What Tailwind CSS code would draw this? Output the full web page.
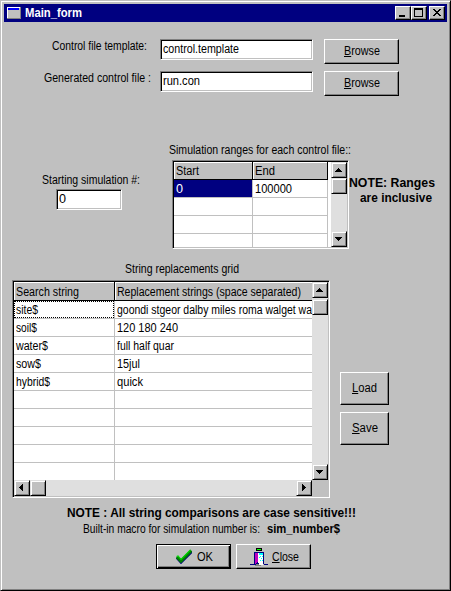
<!DOCTYPE html>
<html lang="en">
<head>
<meta charset="utf-8">
<title>Main_form</title>
<script src="https://cdn.jsdelivr.net/npm/@tailwindcss/browser@4"></script>
</head>
<body class="bg-[#c0c0c0] overflow-hidden">
<main class="w-[451px] h-[591px] flex flex-col bg-[#c0c0c0] text-black text-[12.5px] leading-4 font-['Liberation_Sans',Arial,sans-serif] border border-t-[#c0c0c0] border-l-[#c0c0c0] border-r-black border-b-black shadow-[inset_1px_1px_0_#fff,inset_-1px_-1px_0_#808080]">

  <header class="mx-[3px] mt-[3px] h-[18px] shrink-0 flex items-start bg-[#000080] text-white pl-[3px] pr-[2px]">
    <svg class="mt-[3px] w-[14px] h-[12px]" viewBox="0 0 14 12" shape-rendering="crispEdges"><path fill="#808080" d="M0 0h14v12H0z"/><path fill="#fff" d="M0 0h13v11H0z"/><path fill="#c0c0c0" d="M1 1h12v10H1z"/><path fill="#0000ff" d="M1 1h11v2H1z"/></svg>
    <h1 class="ml-1 mt-px font-bold text-[12.5px] leading-4"><span data-w="57">Main_form</span></h1>
    <div class="ml-auto mt-[2px] flex">
      <button class="w-4 h-[14px] bg-[#c0c0c0] border border-t-white border-l-white border-r-black border-b-black shadow-[inset_-1px_-1px_0_#808080]"><svg class="w-[14px] h-[12px]" viewBox="0 0 14 12" shape-rendering="crispEdges"><path d="M3 8h6v2H3z"/></svg></button>
      <button class="w-4 h-[14px] bg-[#c0c0c0] border border-t-white border-l-white border-r-black border-b-black shadow-[inset_-1px_-1px_0_#808080]"><svg class="w-[14px] h-[12px]" viewBox="0 0 14 12" shape-rendering="crispEdges"><path fill-rule="evenodd" d="M2 1h9v9H2zM3 3h7v6H3z"/></svg></button>
      <button class="ml-[2px] w-4 h-[14px] bg-[#c0c0c0] border border-t-white border-l-white border-r-black border-b-black shadow-[inset_-1px_-1px_0_#808080]"><svg class="w-[14px] h-[12px]" viewBox="0 0 14 12" shape-rendering="crispEdges"><path d="M3 2h2v1h1v1h2V3h1V2h2v1h-1v1H9v1H8v1h1v1h1v1h1v1H9V8H8V7H6v1H5v1H3V8h1V7h1V6h1V5H5V4H4V3H3z"/></svg></button>
    </div>
  </header>

  <section class="mt-4 grid grid-cols-[159px_164px_75px] auto-rows-[32px] shrink-0">
    <label class="pl-[51px]"><span data-w="95">Control file template:</span></label>
    <div class="mt-px w-[153px] h-[21px] bg-white border border-t-[#808080] border-l-[#808080] border-r-white border-b-white shadow-[inset_1px_1px_0_#000,inset_-1px_-1px_0_#c0c0c0] pl-[2px] pt-px"><span data-w="76">control.template</span></div>
    <button class="mt-px h-[25px] border border-t-white border-l-white border-r-black border-b-black shadow-[inset_-1px_-1px_0_#808080] flex items-start justify-center pt-[3px]"><span data-w="36"><u>B</u>rowse</span></button>
    <label class="pl-[43px]"><span data-w="107">Generated control file :</span></label>
    <div class="mt-px w-[153px] h-[21px] bg-white border border-t-[#808080] border-l-[#808080] border-r-white border-b-white shadow-[inset_1px_1px_0_#000,inset_-1px_-1px_0_#c0c0c0] pl-[2px] pt-px"><span data-w="37">run.con</span></div>
    <button class="mt-px h-[25px] border border-t-white border-l-white border-r-black border-b-black shadow-[inset_-1px_-1px_0_#808080] flex items-start justify-center pt-[3px]"><span data-w="36"><u>B</u>rowse</span></button>
  </section>

  <section class="mt-10 h-[107px] shrink-0 flex items-start">
    <div class="w-[127px] pl-[41px] pt-[30px]">
      <div class="h-4"><span data-w="98">Starting simulation #:</span></div>
      <div class="mt-px ml-[14px] w-[66px] h-[21px] bg-white border border-t-[#808080] border-l-[#808080] border-r-white border-b-white shadow-[inset_1px_1px_0_#000,inset_-1px_-1px_0_#c0c0c0] pl-[2px] pt-px"><span data-w="7">0</span></div>
    </div>
    <div class="ml-[41px] w-[180px]">
      <div class="h-4 whitespace-nowrap"><span data-w="182">Simulation ranges for each control file::</span></div>
      <div class="mt-[2px] ml-[3px] w-[177px] h-[89px] p-px flex bg-white border border-t-[#808080] border-l-[#808080] border-r-white border-b-white shadow-[inset_1px_1px_0_#000,inset_-1px_-1px_0_#c0c0c0]">
        <div class="w-[157px] h-[85px] overflow-hidden grid grid-cols-[79px_75px] auto-rows-[18px]">
          <div class="bg-[#c0c0c0] border-r border-b border-black shadow-[inset_1px_1px_0_#fff] pl-[2px] pt-px"><span data-w="23">Start</span></div>
          <div class="bg-[#c0c0c0] border-r border-b border-black shadow-[inset_1px_1px_0_#fff] pl-[2px] pt-px"><span data-w="20">End</span></div>
          <div class="bg-[#000080] text-white border-r border-b border-[#c0c0c0] pl-[2px] pt-px"><span data-w="7">0</span></div>
          <div class="border-r border-b border-[#c0c0c0] pl-[2px] pt-px"><span data-w="37">100000</span></div>
          <div class="border-r border-b border-[#c0c0c0]"></div><div class="border-r border-b border-[#c0c0c0]"></div>
          <div class="border-r border-b border-[#c0c0c0]"></div><div class="border-r border-b border-[#c0c0c0]"></div>
          <div class="border-r border-b border-[#c0c0c0]"></div><div class="border-r border-b border-[#c0c0c0]"></div>
        </div>
        <div class="w-4 h-[85px] bg-[#dfdfdf] flex flex-col">
          <button class="size-4 bg-[#c0c0c0] border border-t-[#dfdfdf] border-l-[#dfdfdf] border-r-black border-b-black shadow-[inset_1px_1px_0_#fff,inset_-1px_-1px_0_#808080]"><svg class="size-[14px]" viewBox="0 0 14 14" shape-rendering="crispEdges"><path d="M6 5h1v1h1v1h1v1h1v1H3V8h1V7h1V6h1z"/></svg></button>
          <div class="size-4 bg-[#c0c0c0] border border-t-[#dfdfdf] border-l-[#dfdfdf] border-r-black border-b-black shadow-[inset_1px_1px_0_#fff,inset_-1px_-1px_0_#808080]"></div>
          <button class="mt-auto size-4 bg-[#c0c0c0] border border-t-[#dfdfdf] border-l-[#dfdfdf] border-r-black border-b-black shadow-[inset_1px_1px_0_#fff,inset_-1px_-1px_0_#808080]"><svg class="size-[14px]" viewBox="0 0 14 14" shape-rendering="crispEdges"><path d="M3 5h7v1H9v1H8v1H7v1H6V8H5V7H4V6H3z"/></svg></button>
        </div>
      </div>
    </div>
    <div class="pt-[33px] font-bold whitespace-nowrap">
      <div class="h-[15px]"><span data-w="86">NOTE: Ranges</span></div>
      <div class="h-[15px] pl-[11px]"><span data-w="72">are inclusive</span></div>
    </div>
  </section>

  <section class="mt-3 h-[237px] shrink-0">
    <div class="pl-[124px] h-[19px]"><span data-w="114">String replacements grid</span></div>
    <div class="pl-[11px] flex items-start">
      <div class="w-[318px] h-[218px] p-px bg-[#c0c0c0] border border-t-[#808080] border-l-[#808080] border-r-white border-b-white shadow-[inset_1px_1px_0_#000,inset_-1px_-1px_0_#c0c0c0] grid grid-cols-[298px_16px] grid-rows-[198px_16px]">
        <div class="bg-white overflow-hidden grid grid-cols-[101px_198px] grid-rows-[19px] auto-rows-[18px] whitespace-nowrap">
          <div class="bg-[#c0c0c0] border-r border-b border-black shadow-[inset_1px_1px_0_#fff] pl-[2px] pt-[2px]"><span data-w="63">Search string</span></div>
          <div class="bg-[#c0c0c0] border-b border-black shadow-[inset_1px_1px_0_#fff] pl-[2px] pt-[2px]"><span data-w="184">Replacement strings (space separated)</span></div>
          <div class="border-r border-b border-[#c0c0c0]"><div class="h-[17px] outline-1 outline-dotted outline-black -outline-offset-1 pl-[2px] pt-px"><span data-w="22">site$</span></div></div>
          <div class="border-b border-[#c0c0c0] pl-[2px] pt-px"><span data-w="195">goondi stgeor dalby miles roma walget wa</span></div>
          <div class="border-r border-b border-[#c0c0c0] pl-[2px] pt-px"><span data-w="21">soil$</span></div>
          <div class="border-b border-[#c0c0c0] pl-[2px] pt-px"><span data-w="61">120 180 240</span></div>
          <div class="border-r border-b border-[#c0c0c0] pl-[2px] pt-px"><span data-w="32">water$</span></div>
          <div class="border-b border-[#c0c0c0] pl-[2px] pt-px"><span data-w="57">full half quar</span></div>
          <div class="border-r border-b border-[#c0c0c0] pl-[2px] pt-px"><span data-w="25">sow$</span></div>
          <div class="border-b border-[#c0c0c0] pl-[2px] pt-px"><span data-w="23">15jul</span></div>
          <div class="border-r border-b border-[#c0c0c0] pl-[2px] pt-px"><span data-w="34">hybrid$</span></div>
          <div class="border-b border-[#c0c0c0] pl-[2px] pt-px"><span data-w="26">quick</span></div>
          <div class="border-r border-b border-[#c0c0c0]"></div><div class="border-b border-[#c0c0c0]"></div>
          <div class="border-r border-b border-[#c0c0c0]"></div><div class="border-b border-[#c0c0c0]"></div>
          <div class="border-r border-b border-[#c0c0c0]"></div><div class="border-b border-[#c0c0c0]"></div>
          <div class="border-r border-b border-[#c0c0c0]"></div><div class="border-b border-[#c0c0c0]"></div>
          <div class="border-r border-b border-[#c0c0c0]"></div><div class="border-b border-[#c0c0c0]"></div>
        </div>
        <div class="bg-[#dfdfdf] flex flex-col">
          <button class="size-4 bg-[#c0c0c0] border border-t-[#dfdfdf] border-l-[#dfdfdf] border-r-black border-b-black shadow-[inset_1px_1px_0_#fff,inset_-1px_-1px_0_#808080]"><svg class="size-[14px]" viewBox="0 0 14 14" shape-rendering="crispEdges"><path d="M6 5h1v1h1v1h1v1h1v1H3V8h1V7h1V6h1z"/></svg></button>
          <div class="mt-px size-4 bg-[#c0c0c0] border border-t-[#dfdfdf] border-l-[#dfdfdf] border-r-black border-b-black shadow-[inset_1px_1px_0_#fff,inset_-1px_-1px_0_#808080]"></div>
          <button class="mt-auto size-4 bg-[#c0c0c0] border border-t-[#dfdfdf] border-l-[#dfdfdf] border-r-black border-b-black shadow-[inset_1px_1px_0_#fff,inset_-1px_-1px_0_#808080]"><svg class="size-[14px]" viewBox="0 0 14 14" shape-rendering="crispEdges"><path d="M3 5h7v1H9v1H8v1H7v1H6V8H5V7H4V6H3z"/></svg></button>
        </div>
        <div class="bg-[#dfdfdf] flex">
          <button class="size-4 bg-[#c0c0c0] border border-t-[#dfdfdf] border-l-[#dfdfdf] border-r-black border-b-black shadow-[inset_1px_1px_0_#fff,inset_-1px_-1px_0_#808080]"><svg class="size-[14px]" viewBox="0 0 14 14" shape-rendering="crispEdges"><path d="M8 3v7H7V9H6V8H5V7H4V6h1V5h1V4h1V3z"/></svg></button>
          <div class="size-4 bg-[#c0c0c0] border border-t-[#dfdfdf] border-l-[#dfdfdf] border-r-black border-b-black shadow-[inset_1px_1px_0_#fff,inset_-1px_-1px_0_#808080]"></div>
          <button class="ml-auto size-4 bg-[#c0c0c0] border border-t-[#dfdfdf] border-l-[#dfdfdf] border-r-black border-b-black shadow-[inset_1px_1px_0_#fff,inset_-1px_-1px_0_#808080]"><svg class="size-[14px]" viewBox="0 0 14 14" shape-rendering="crispEdges"><path d="M5 3h1v1h1v1h1v1h1v1H8v1H7v1H6v1H5z"/></svg></button>
        </div>
      </div>
      <div class="ml-[10px] mt-[92px] flex flex-col gap-[7px]">
        <button class="w-[49px] h-[33px] border border-t-white border-l-white border-r-black border-b-black shadow-[inset_-1px_-1px_0_#808080] flex items-start justify-center pt-[7px]"><span data-w="25"><u>L</u>oad</span></button>
        <button class="w-[49px] h-[33px] border border-t-white border-l-white border-r-black border-b-black shadow-[inset_-1px_-1px_0_#808080] flex items-start justify-center pt-[7px]"><span data-w="26"><u>S</u>ave</span></button>
      </div>
    </div>
  </section>

  <footer class="mt-[7px]">
    <div class="h-4 pl-[66px] font-bold"><span data-w="289">NOTE : All string comparisons are case sensitive!!!</span></div>
    <div class="h-4 pl-[82px] flex"><span data-w="177">Built-in macro for simulation number is:</span><b class="ml-[7px]"><span data-w="73">sim_number$</span></b></div>
    <div class="mt-[7px] pl-[155px] flex gap-[5px]">
      <button class="w-[75px] h-[25px] border border-black shadow-[inset_1px_1px_0_#fff,inset_-1px_-1px_0_#000,inset_-2px_-2px_0_#808080] flex items-start pl-[19px] pt-1">
        <svg class="w-[16px] h-[15px]" viewBox="0 0 16 15"><path d="M0.5 8.5 5 13.5 16 2.5" stroke="#000080" stroke-width="2.4" fill="none"/><path d="M1 8 5 12 15.3 1.5" stroke="#008000" stroke-width="3.2" fill="none"/><path d="M0.5 7.5 2 7l3 3.5L14.5.8" stroke="#00e000" stroke-width="1.1" fill="none"/></svg>
        <span class="ml-[5px] h-4"><span data-w="16">OK</span></span>
      </button>
      <button class="w-[75px] h-[25px] border border-t-white border-l-white border-r-black border-b-black shadow-[inset_-1px_-1px_0_#808080] flex items-start pl-[13px]">
        <svg class="mt-[3px] w-[18px] h-[18px]" viewBox="0 0 18 18" shape-rendering="crispEdges"><path d="M6 0h6v3H6z"/><path fill="#00ff00" d="M7 1h4v1H7z"/><path fill="#000080" d="M4 4h10v12h4v1h-4v-1H6v1H0v-1h4z"/><path fill="#fff" d="M8 5h5v12H9v-2H8z"/><path fill="#00ffff" d="M9 5h4v2H9zM10 8h1v1h-1zM12 8h1v1h-1zM11 10h1v1h-1zM9 9h1v1H9zM10 12h1v1h-1zM12 12h1v1h-1z"/><path fill="#c000c0" d="M5 5h3v9H7v1H6v1H5z"/><path fill="#808080" d="M6 16h3v1h2v1H5v-1h1z"/></svg>
        <span class="ml-1 mt-1 h-4"><span data-w="27"><u>C</u>lose</span></span>
      </button>
    </div>
  </footer>
</main>
<script>
  function fit(el) {
    el.style.transform = 'none';
    var natural = el.getBoundingClientRect().width, target = Number(el.dataset.w);
    el.style.marginRight = (target - natural) + 'px';
    el.style.transform = 'scaleX(' + target / natural + ')';
  }
  var observer = new ResizeObserver(function (entries) {
    entries.forEach(function (entry) { fit(entry.target); });
  });
  document.querySelectorAll('[data-w]').forEach(function (el) {
    el.style.display = 'inline-block';
    el.style.whiteSpace = 'nowrap';
    el.style.flexShrink = '0';
    el.style.transformOrigin = '0 0';
    observer.observe(el);
  });
  window.addEventListener('load', function () {
    document.querySelectorAll('[data-w]').forEach(fit);
  });
</script>
</body>
</html>
